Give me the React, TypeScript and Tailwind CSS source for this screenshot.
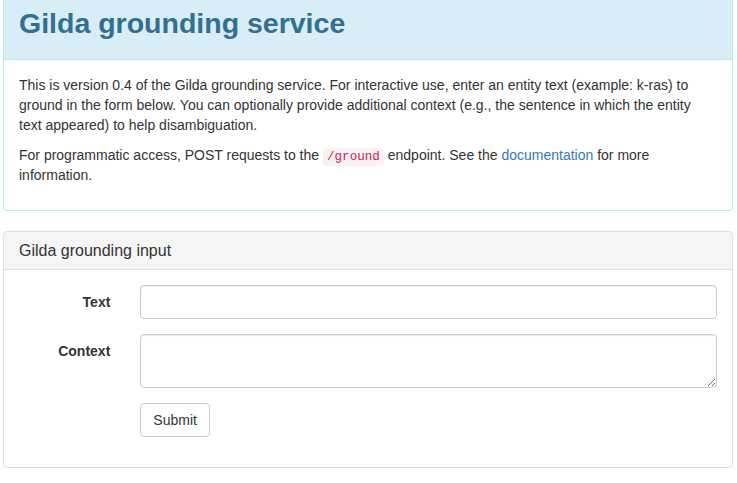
export default function App() {
  return (
    <div className="min-h-[483px] bg-white pl-[3px] pr-[4px] font-['Liberation_Sans',Arial,sans-serif] text-[14px] leading-[20px] text-[#333]">
      {/* Intro panel */}
      <div className="mb-5 rounded-b border border-t-0 border-[#bce8f1] bg-white">
        <div className="h-[60px] border-b border-[#bce8f1] bg-[#d9edf7] px-[15px] pt-[3px]">
          <h1 className="text-[28.5px] font-semibold leading-[40px] text-[#31708f]">Gilda grounding service</h1>
        </div>
        <div className="p-[15px]">
          <p className="mb-[10px]">
            This is version 0.4 of the Gilda grounding service. For interactive use, enter an entity text (example: k-ras) to
            <br />
            ground in the form below. You can optionally provide additional context (e.g., the sentence in which the entity
            <br />
            text appeared) to help disambiguation.
          </p>
          <p className="mb-[10px]">
            For programmatic access, POST requests to the{' '}
            <code className="rounded bg-[#f9f2f4] px-1 py-[2px] font-['Liberation_Mono',monospace] text-[12.6px] leading-[14px] text-[#c7254e]">
              /ground
            </code>{' '}
            endpoint. See the <a className="text-[#337ab7]">documentation</a> for more
            <br />
            information.
          </p>
        </div>
      </div>

      {/* Input panel */}
      <div className="rounded border border-[#ddd] bg-white">
        <div className="rounded-t border-b border-[#ddd] bg-[#f5f5f5] px-[15px] pb-[10px] pt-[11px]">
          <h3 className="text-[16px] leading-[16px]">Gilda grounding input</h3>
        </div>
        <form className="p-[15px]" onSubmit={e => e.preventDefault()}>
          <div className="mx-[-15px] mb-[15px] flex">
            <label className="w-1/6 px-[15px] pt-[7px] text-right font-bold">Text</label>
            <div className="w-5/6 px-[15px]">
              <input
                type="text"
                className="block h-[34px] w-full rounded border border-[#ccc] px-3 py-[6px] shadow-[inset_0_1px_1px_rgba(0,0,0,0.075)]"
              />
            </div>
          </div>
          <div className="mx-[-15px] mb-[15px] flex">
            <label className="w-1/6 px-[15px] pt-[7px] text-right font-bold">Context</label>
            <div className="w-5/6 px-[15px]">
              <textarea
                rows={2}
                className="block h-[54px] w-full rounded border border-[#ccc] px-3 py-[6px] shadow-[inset_0_1px_1px_rgba(0,0,0,0.075)]"
              />
            </div>
          </div>
          <div className="mx-[-15px] mb-[15px] flex">
            <div className="ml-[16.6667%] px-[15px]">
              <button
                type="submit"
                className="h-[34px] rounded border border-[#ccc] bg-white px-3 py-[6px] text-[14px] leading-[20px] text-[#333]"
              >
                Submit
              </button>
            </div>
          </div>
        </form>
      </div>
    </div>
  );
}
